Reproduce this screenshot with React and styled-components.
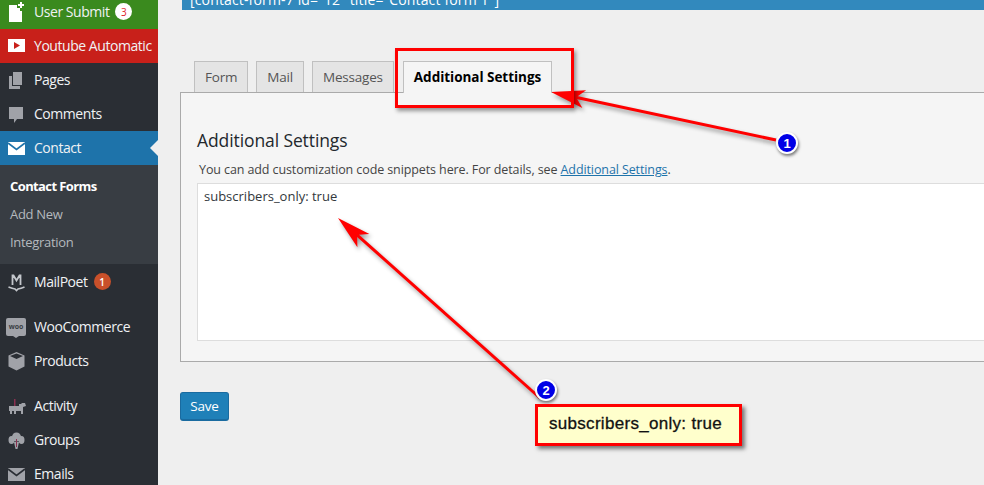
import React from 'react';
import styled, { createGlobalStyle } from 'styled-components';

const GlobalStyle = createGlobalStyle`
  html, body {
    margin: 0;
    padding: 0;
    background: #efefef;
  }
  body {
    font-family: "Open Sans", "Noto Sans", sans-serif;
  }
`;

const menuBg = { green: '#3a8a1e', red: '#c8201a', blue: '#1e73aa', plain: 'transparent' };

// Sidebar icons, all on a 20x20 box
const icons = {
  submit: (
    <g fill="#fff">
      <path d="M2 3h8v3h3v3h2v11H2z" />
      <path d="M13 0h2v2h2v2h-2v2h-2V4h-2V2h2z" />
    </g>
  ),
  youtube: (
    <g>
      <rect x="1" y="3" width="17" height="13" fill="#fff" />
      <path d="M7 6l6 3.500L7 13z" fill="#c8201a" />
    </g>
  ),
  pages: (
    <g fill="#a0a2a8">
      <path d="M6 2h9v13H6z" />
      <path d="M2 6h3v10h8v3H2z" />
    </g>
  ),
  comments: <path d="M2 3h14v12h-6l-3 4v-4H2z" fill="#a0a2a8" />,
  mail: (
    <g>
      <rect x="1" y="4" width="17" height="13" fill="#fff" />
      <path d="M1 5l8.500 6.500L18 5" fill="none" stroke="#1e73aa" strokeWidth="1.600" />
    </g>
  ),
  mailpoet: (
    <g fill="none" stroke="#c4c7cc">
      <path d="M5.500 13V3.500h1l3 5 3-5h1V13" strokeWidth="1.800" />
      <path d="M1.500 15q4 1.500 6.500 2l1.500 1.500L11 17q3-.5 6.500-2" strokeWidth="1.600" />
    </g>
  ),
  products: <path d="M9.500 1l8 3.500v11l-8 4-8-4v-11zM3 5l6.500 3L16 5l-6.500-2.500z" fill="#a0a2a8" fillRule="evenodd" />,
  activity: (
    <g fill="#a0a2a8">
      <path d="M2 10h10V8h2l1-1h3l1 3-3 1v7h-2v-3H9v3H7v-3H5v3H3v-3H2z" />
      <rect x="7" y="3" width="1.500" height="7" fill="#8a3050" />
    </g>
  ),
  groups: (
    <g fill="#a0a2a8">
      <circle cx="9.500" cy="7" r="4.500" />
      <ellipse cx="4.500" cy="10" rx="3" ry="4" />
      <ellipse cx="14.500" cy="10" rx="3" ry="4" />
      <path d="M7 12h5l-1.500 7h-2z" />
      <path d="M9.500 9v8" stroke="#8a3050" />
    </g>
  ),
  emails: (
    <g>
      <rect x="1" y="4" width="17" height="13" fill="#a0a2a8" />
      <path d="M1 5l8.500 6.500L18 5" fill="none" stroke="#2a2e34" strokeWidth="1.600" />
    </g>
  ),
};

const Page = styled.div`
  position: relative;
  display: flex;
  width: 984px;
  height: 485px;
  overflow: hidden;
  background: #efefef;
`;

const Sidebar = styled.nav`
  flex: 0 0 158px;
  margin-top: -5px;
  background: #2a2e34;
`;

const MenuItem = styled.div`
  position: relative;
  display: flex;
  align-items: center;
  box-sizing: border-box;
  height: 34px;
  margin-top: ${(p) => p.$gap || 0}px;
  padding: 0 0 1px 7px;
  gap: 7px;
  background: ${(p) => menuBg[p.$tone || 'plain']};
  color: #f0f2f4;
  font-size: 14px;
  letter-spacing: -0.45px;
  white-space: nowrap;
  overflow: hidden;

  svg {
    flex: 0 0 20px;
  }
`;

const Notch = styled.span`
  position: absolute;
  right: 0;
  top: 9px;
  border: 8px solid transparent;
  border-right-color: #efefef;
  border-left-width: 0;
`;

const Count = styled.span`
  display: inline-flex;
  align-items: center;
  justify-content: center;
  width: 17px;
  height: 17px;
  margin-left: -1px;
  border-radius: 50%;
  background: ${(p) => (p.$light ? '#fff' : '#c9502a')};
  color: ${(p) => (p.$light ? '#e0202a' : '#fff')};
  font-size: 10px;
  letter-spacing: 0;
  font-weight: ${(p) => (p.$light ? 400 : 600)};
`;

const SubMenu = styled.div`
  display: flex;
  flex-direction: column;
  height: 99px;
  padding-top: 7px;
  box-sizing: border-box;
  background: #383d43;
`;

const SubItem = styled.div`
  height: 28px;
  line-height: 28px;
  padding-left: 10px;
  font-size: 13px;
  letter-spacing: ${(p) => (p.$current ? -0.6 : -0.3)}px;
  font-weight: ${(p) => (p.$current ? 700 : 400)};
  color: ${(p) => (p.$current ? '#fff' : '#b4b9be')};
`;

const WooIcon = styled.span`
  position: relative;
  flex: 0 0 20px;
  height: 18px;
  margin: 0 1px 0 -1px;
  border-radius: 2px;
  background: #a0a2a8;
  color: #3a3e44;
  font-size: 7px;
  font-weight: 700;
  line-height: 18px;
  text-align: center;
  letter-spacing: 0;

  &::after {
    content: '';
    position: absolute;
    left: 7px;
    bottom: -2px;
    border-top: 2px solid #a0a2a8;
    border-left: 3px solid transparent;
    border-right: 3px solid transparent;
  }
`;

const Main = styled.main`
  flex: 1;
  min-width: 0;
`;

const ShortcodeBar = styled.div`
  display: flex;
  align-items: flex-end;
  height: 10px;
  margin-left: 24px;
  padding-left: 8px;
  overflow: hidden;
  background: #3289bd;
  color: #fff;
  font-size: 14px;
  letter-spacing: 0.15px;
  line-height: 20px;
  white-space: nowrap;
`;

const TabRow = styled.div`
  display: flex;
  gap: 8px;
  margin: 51px 0 0 36px;
`;

const Tab = styled.div`
  position: relative;
  height: ${(p) => (p.$active ? 31 : 30)}px;
  margin-bottom: ${(p) => (p.$active ? -1 : 0)}px;
  margin-left: ${(p) => (p.$active ? 1 : 0)}px;
  padding: 0 10px;
  border: 1px solid #c0c0c0;
  border-bottom: 0;
  background: ${(p) => (p.$active ? '#f5f5f5' : '#e4e4e4')};
  color: ${(p) => (p.$active ? '#000' : '#555')};
  font-size: 13.5px;
  font-weight: ${(p) => (p.$active ? 700 : 400)};
  letter-spacing: ${(p) => (p.$active ? -0.03 : -0.2)}px;
  line-height: 30px;
  white-space: nowrap;
  z-index: 1;
`;

const Panel = styled.section`
  box-sizing: border-box;
  height: 270px;
  margin: 0 -20px 0 22px;
  padding: 0 0 0 16px;
  border: 1px solid #aaa;
  background: #f5f5f5;
`;

const Heading = styled.h2`
  margin: 35px 0 0;
  color: #23282d;
  font-size: 17.5px;
  font-weight: 400;
  line-height: 24px;
  letter-spacing: -0.1px;
`;

const Hint = styled.p`
  margin: 8px 0 0 2px;
  color: #444;
  font-size: 12.5px;
  line-height: 20px;
  letter-spacing: -0.1px;

  a {
    color: #1e73aa;
    text-decoration: underline;
  }
`;

const CodeField = styled.div`
  box-sizing: border-box;
  height: 158px;
  margin-top: 3px;
  padding: 3px 6px;
  border: 1px solid #ddd;
  background: #fff;
  color: #32373c;
  font-size: 13px;
  line-height: 18px;
`;

const SaveButton = styled.button`
  display: block;
  box-sizing: border-box;
  width: 49px;
  height: 29px;
  margin: 30px 0 0 22px;
  padding: 0;
  border: 1px solid #1a6ba0;
  border-bottom-width: 2px;
  border-radius: 3px;
  background: #1f80b8;
  color: #fff;
  font-family: inherit;
  font-size: 13.5px;
  letter-spacing: -0.2px;
`;

// Everything below lies over the page: the annotations of the screenshot
const Overlay = styled.svg`
  position: absolute;
  left: 0;
  top: 0;
  pointer-events: none;
  filter: drop-shadow(2px 3px 2px rgba(0, 0, 0, 0.4));
`;

const HighlightBox = styled.div`
  position: absolute;
  left: 395px;
  top: 48px;
  box-sizing: border-box;
  width: 179px;
  height: 60px;
  border: 3px solid #f00;
  box-shadow: 2px 3px 4px rgba(0, 0, 0, 0.4);
  z-index: 2;
`;

const StepBadge = styled.span`
  position: absolute;
  left: ${(p) => p.$x}px;
  top: ${(p) => p.$y}px;
  display: flex;
  align-items: center;
  justify-content: center;
  box-sizing: border-box;
  width: 22px;
  height: 22px;
  border: 2px solid #fff;
  border-radius: 50%;
  background: #0000e6;
  box-shadow: 1px 2px 3px rgba(0, 0, 0, 0.5);
  color: #fff;
  font-family: "Liberation Sans", sans-serif;
  font-size: 13px;
  font-weight: 700;
`;

const Callout = styled.div`
  position: absolute;
  left: 535px;
  top: 404px;
  box-sizing: border-box;
  width: 207px;
  height: 42px;
  padding-left: 11px;
  border: 3px solid #f00;
  background: #ffffcc;
  box-shadow: 3px 3px 4px rgba(0, 0, 0, 0.5);
  color: #111;
  font-family: "Liberation Sans", sans-serif;
  font-size: 17px;
  letter-spacing: 0.3px;
  line-height: 34px;
  -webkit-text-stroke: 0.3px #111;
  white-space: nowrap;
`;

const Arrow = ({ tip, tail }) => {
  const len = Math.hypot(tail[0] - tip[0], tail[1] - tip[1]);
  const ux = (tail[0] - tip[0]) / len;
  const uy = (tail[1] - tip[1]) / len;
  const at = (along, side) => `${tip[0] + ux * along - uy * side},${tip[1] + uy * along + ux * side}`;
  const head = [at(0, 0), at(34, 9), at(27, 1.5), at(27, -1.5), at(34, -9)].join(' ');
  return (
    <g fill="#f00" stroke="#f00">
      <line x1={tip[0] + ux * 25} y1={tip[1] + uy * 25} x2={tail[0]} y2={tail[1]} strokeWidth="3" />
      <polygon points={head} strokeWidth="0" />
    </g>
  );
};

const Icon = ({ name }) => (
  <svg width="20" height="20" viewBox="0 0 20 20">
    {icons[name]}
  </svg>
);

export default function App() {
  return (
    <>
      <GlobalStyle />
      <Page>
        <Sidebar>
          <MenuItem $tone="green">
            <Icon name="submit" />
            User Submit <Count $light>3</Count>
          </MenuItem>
          <MenuItem $tone="red">
            <Icon name="youtube" />
            Youtube Automatic
          </MenuItem>
          <MenuItem>
            <Icon name="pages" />
            Pages
          </MenuItem>
          <MenuItem>
            <Icon name="comments" />
            Comments
          </MenuItem>
          <MenuItem $tone="blue">
            <Icon name="mail" />
            Contact
            <Notch />
          </MenuItem>
          <SubMenu>
            <SubItem $current>Contact Forms</SubItem>
            <SubItem>Add New</SubItem>
            <SubItem>Integration</SubItem>
          </SubMenu>
          <MenuItem $gap={1}>
            <Icon name="mailpoet" />
            MailPoet <Count>1</Count>
          </MenuItem>
          <MenuItem $gap={11}>
            <WooIcon>woo</WooIcon>
            WooCommerce
          </MenuItem>
          <MenuItem>
            <Icon name="products" />
            Products
          </MenuItem>
          <MenuItem $gap={11}>
            <Icon name="activity" />
            Activity
          </MenuItem>
          <MenuItem>
            <Icon name="groups" />
            Groups
          </MenuItem>
          <MenuItem>
            <Icon name="emails" />
            Emails
          </MenuItem>
        </Sidebar>

        <Main>
          <ShortcodeBar>[contact-form-7 id="12" title="Contact form 1"]</ShortcodeBar>
          <TabRow>
            <Tab>Form</Tab>
            <Tab>Mail</Tab>
            <Tab>Messages</Tab>
            <Tab $active>Additional Settings</Tab>
          </TabRow>
          <Panel>
            <Heading>Additional Settings</Heading>
            <Hint>
              You can add customization code snippets here. For details, see <a href="#settings">Additional Settings</a>.
            </Hint>
            <CodeField>subscribers_only: true</CodeField>
          </Panel>
          <SaveButton type="button">Save</SaveButton>
        </Main>

        <HighlightBox />
        <Overlay width="984" height="485" viewBox="0 0 984 485">
          <Arrow tip={[551, 92]} tail={[776, 140]} />
          <Arrow tip={[338, 218]} tail={[540, 398]} />
        </Overlay>
        <StepBadge $x={776} $y={132}>1</StepBadge>
        <StepBadge $x={535} $y={379}>2</StepBadge>
        <Callout>subscribers_only: true</Callout>
      </Page>
    </>
  );
}
